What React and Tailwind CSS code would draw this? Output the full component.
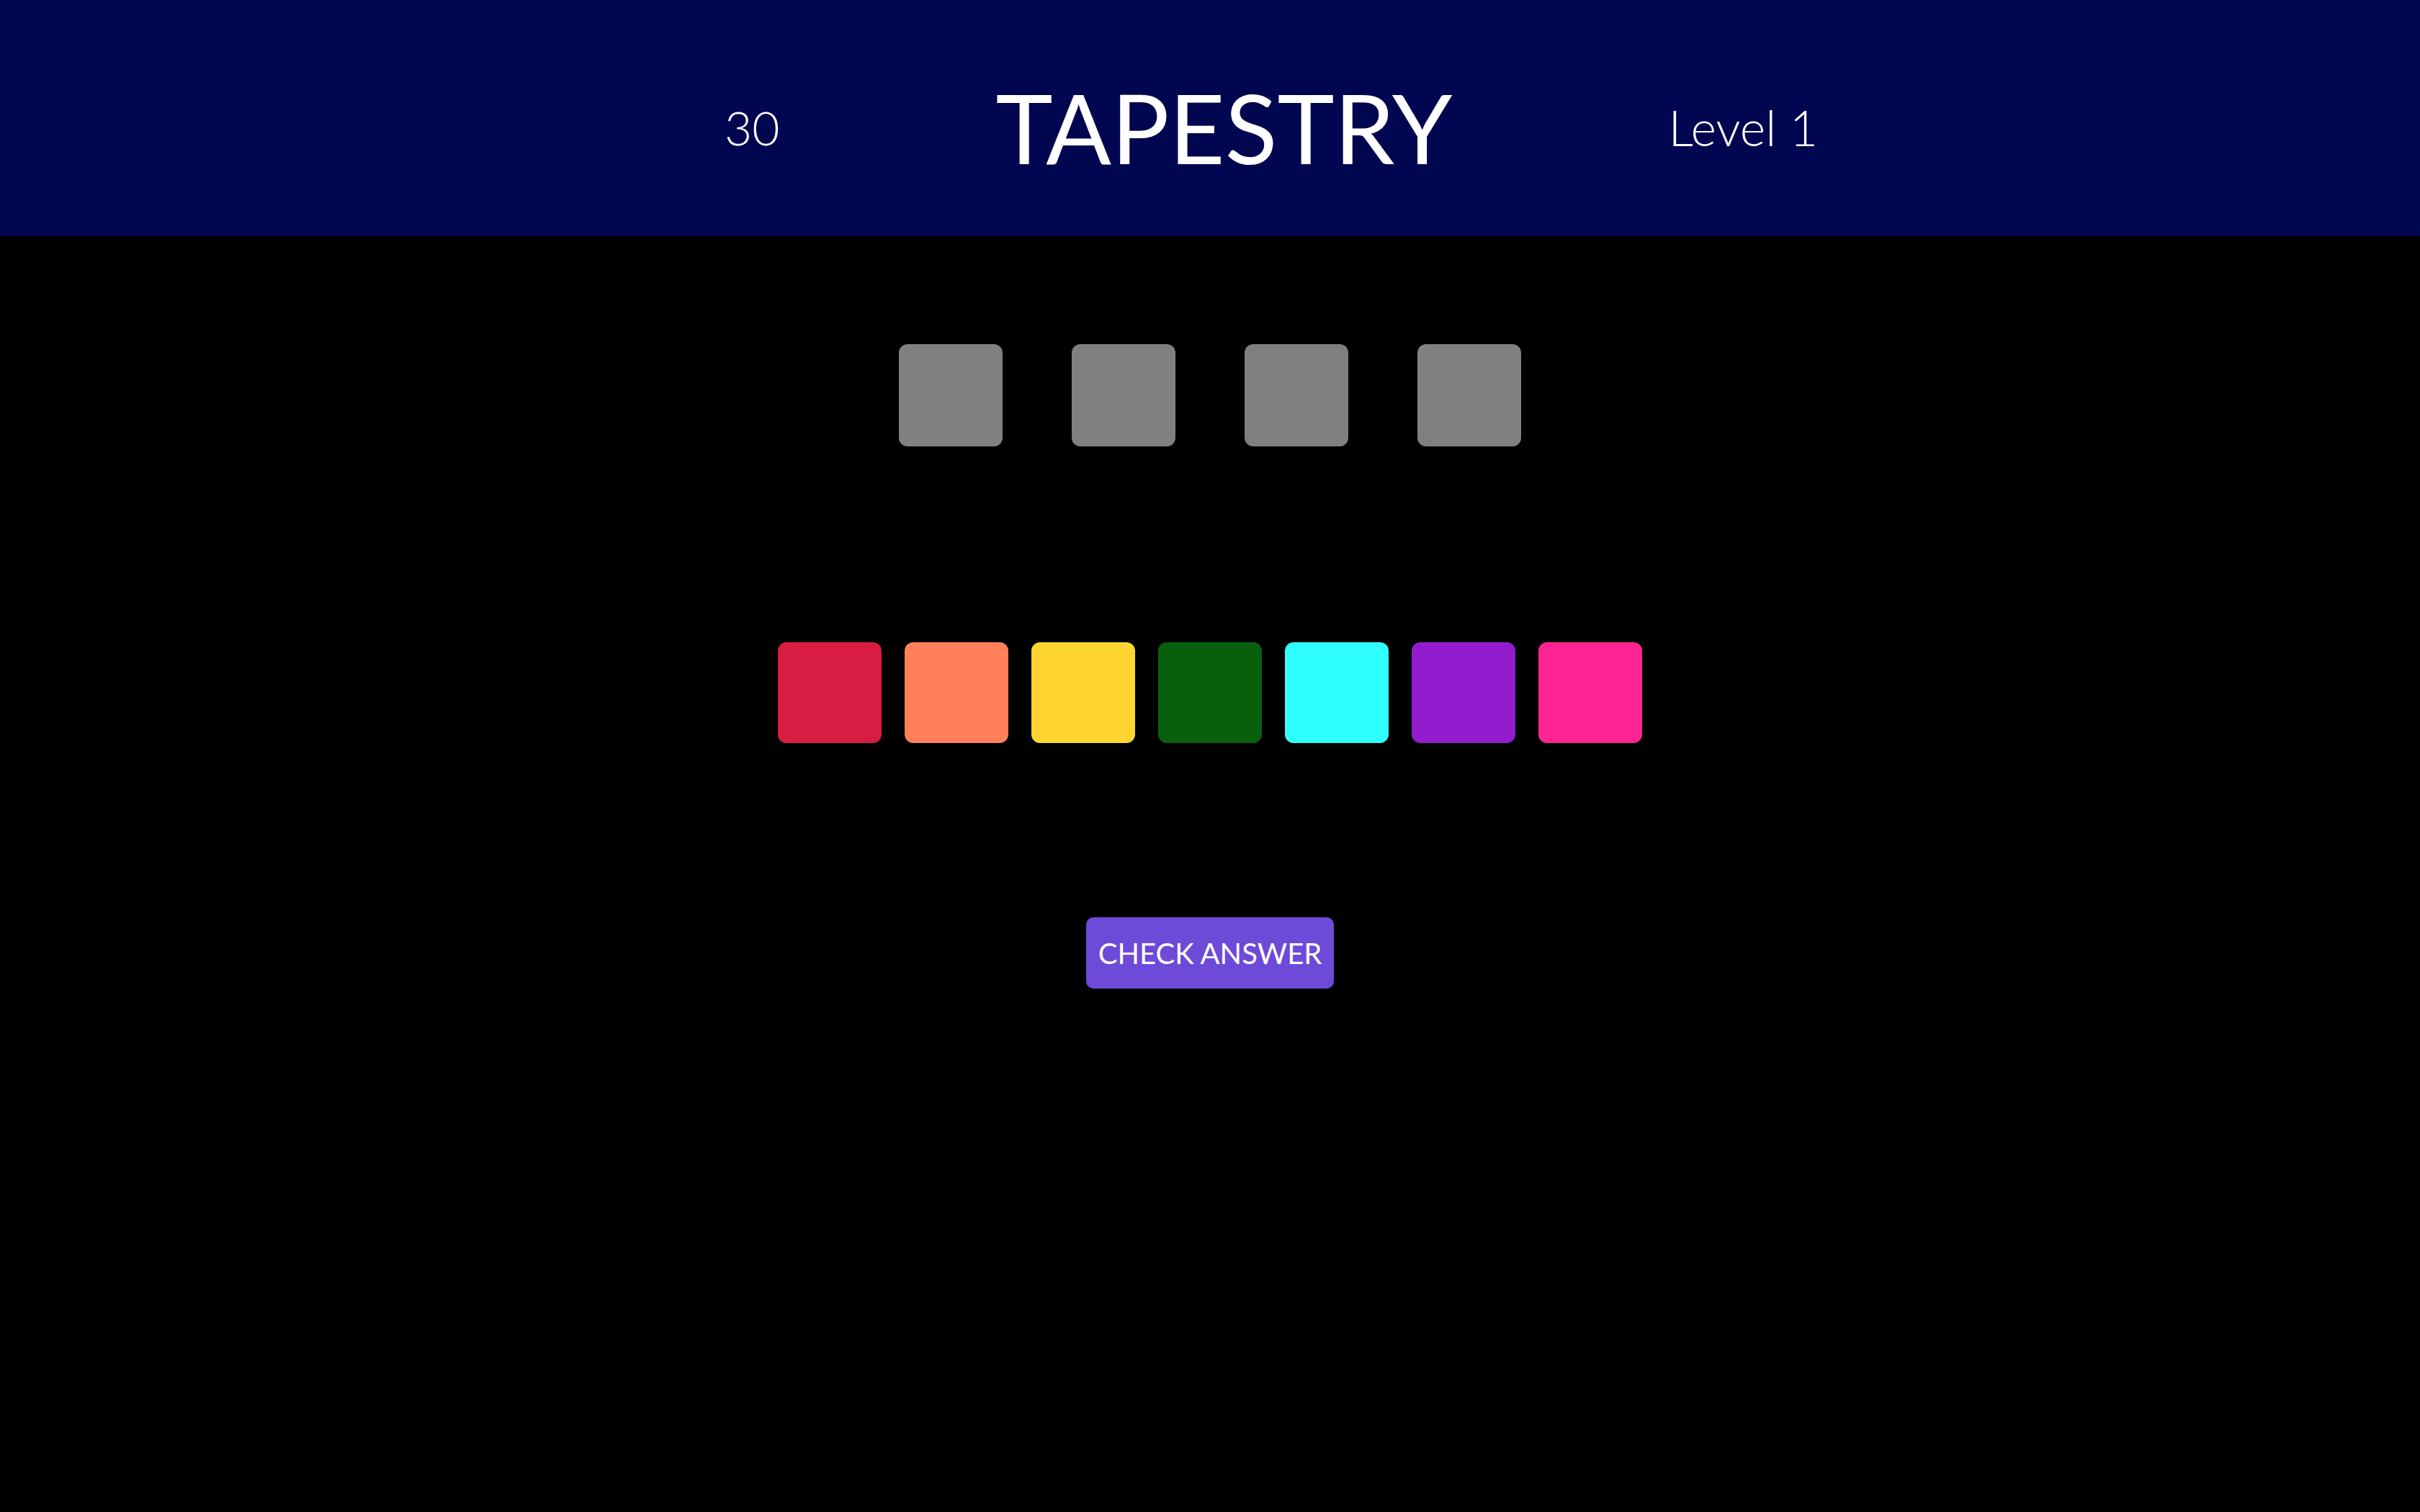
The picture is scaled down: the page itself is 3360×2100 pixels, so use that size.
import React from 'react';

const slots = [0, 1, 2, 3];
const colors = ['#d91c42', '#ff8059', '#ffd531', '#09600c', '#30ffff', '#931ccf', '#ff2493'];

export default function App() {
  return (
    <div className="min-h-[2100px] bg-black text-white" style={{ fontFamily: 'Lato, "Noto Sans", sans-serif' }}>
      <header className="h-[328px] bg-[#000650] flex items-center justify-center gap-[300px] pl-[170px] pt-[26px]">
        <div className="text-[66px] font-light leading-none">30</div>
        <h1 className="text-[134px] font-normal leading-none">TAPESTRY</h1>
        <div className="text-[68px] font-light leading-none">Level 1</div>
      </header>

      <main className="flex flex-col items-center">
        <div className="mt-[150px] flex gap-[96px]">
          {slots.map((s) => (
            <div key={s} className="w-[144px] h-[142px] rounded-[12px] bg-[#808080]" />
          ))}
        </div>

        <div className="mt-[272px] flex gap-[32px]">
          {colors.map((c) => (
            <button key={c} className="w-[144px] h-[140px] rounded-[12px]" style={{ backgroundColor: c }} />
          ))}
        </div>

        <button className="mt-[242px] w-[344px] h-[99px] rounded-[10px] bg-[#6d4ad8] text-[40px] font-normal uppercase flex items-center justify-center">
          Check Answer
        </button>
      </main>
    </div>
  );
}
